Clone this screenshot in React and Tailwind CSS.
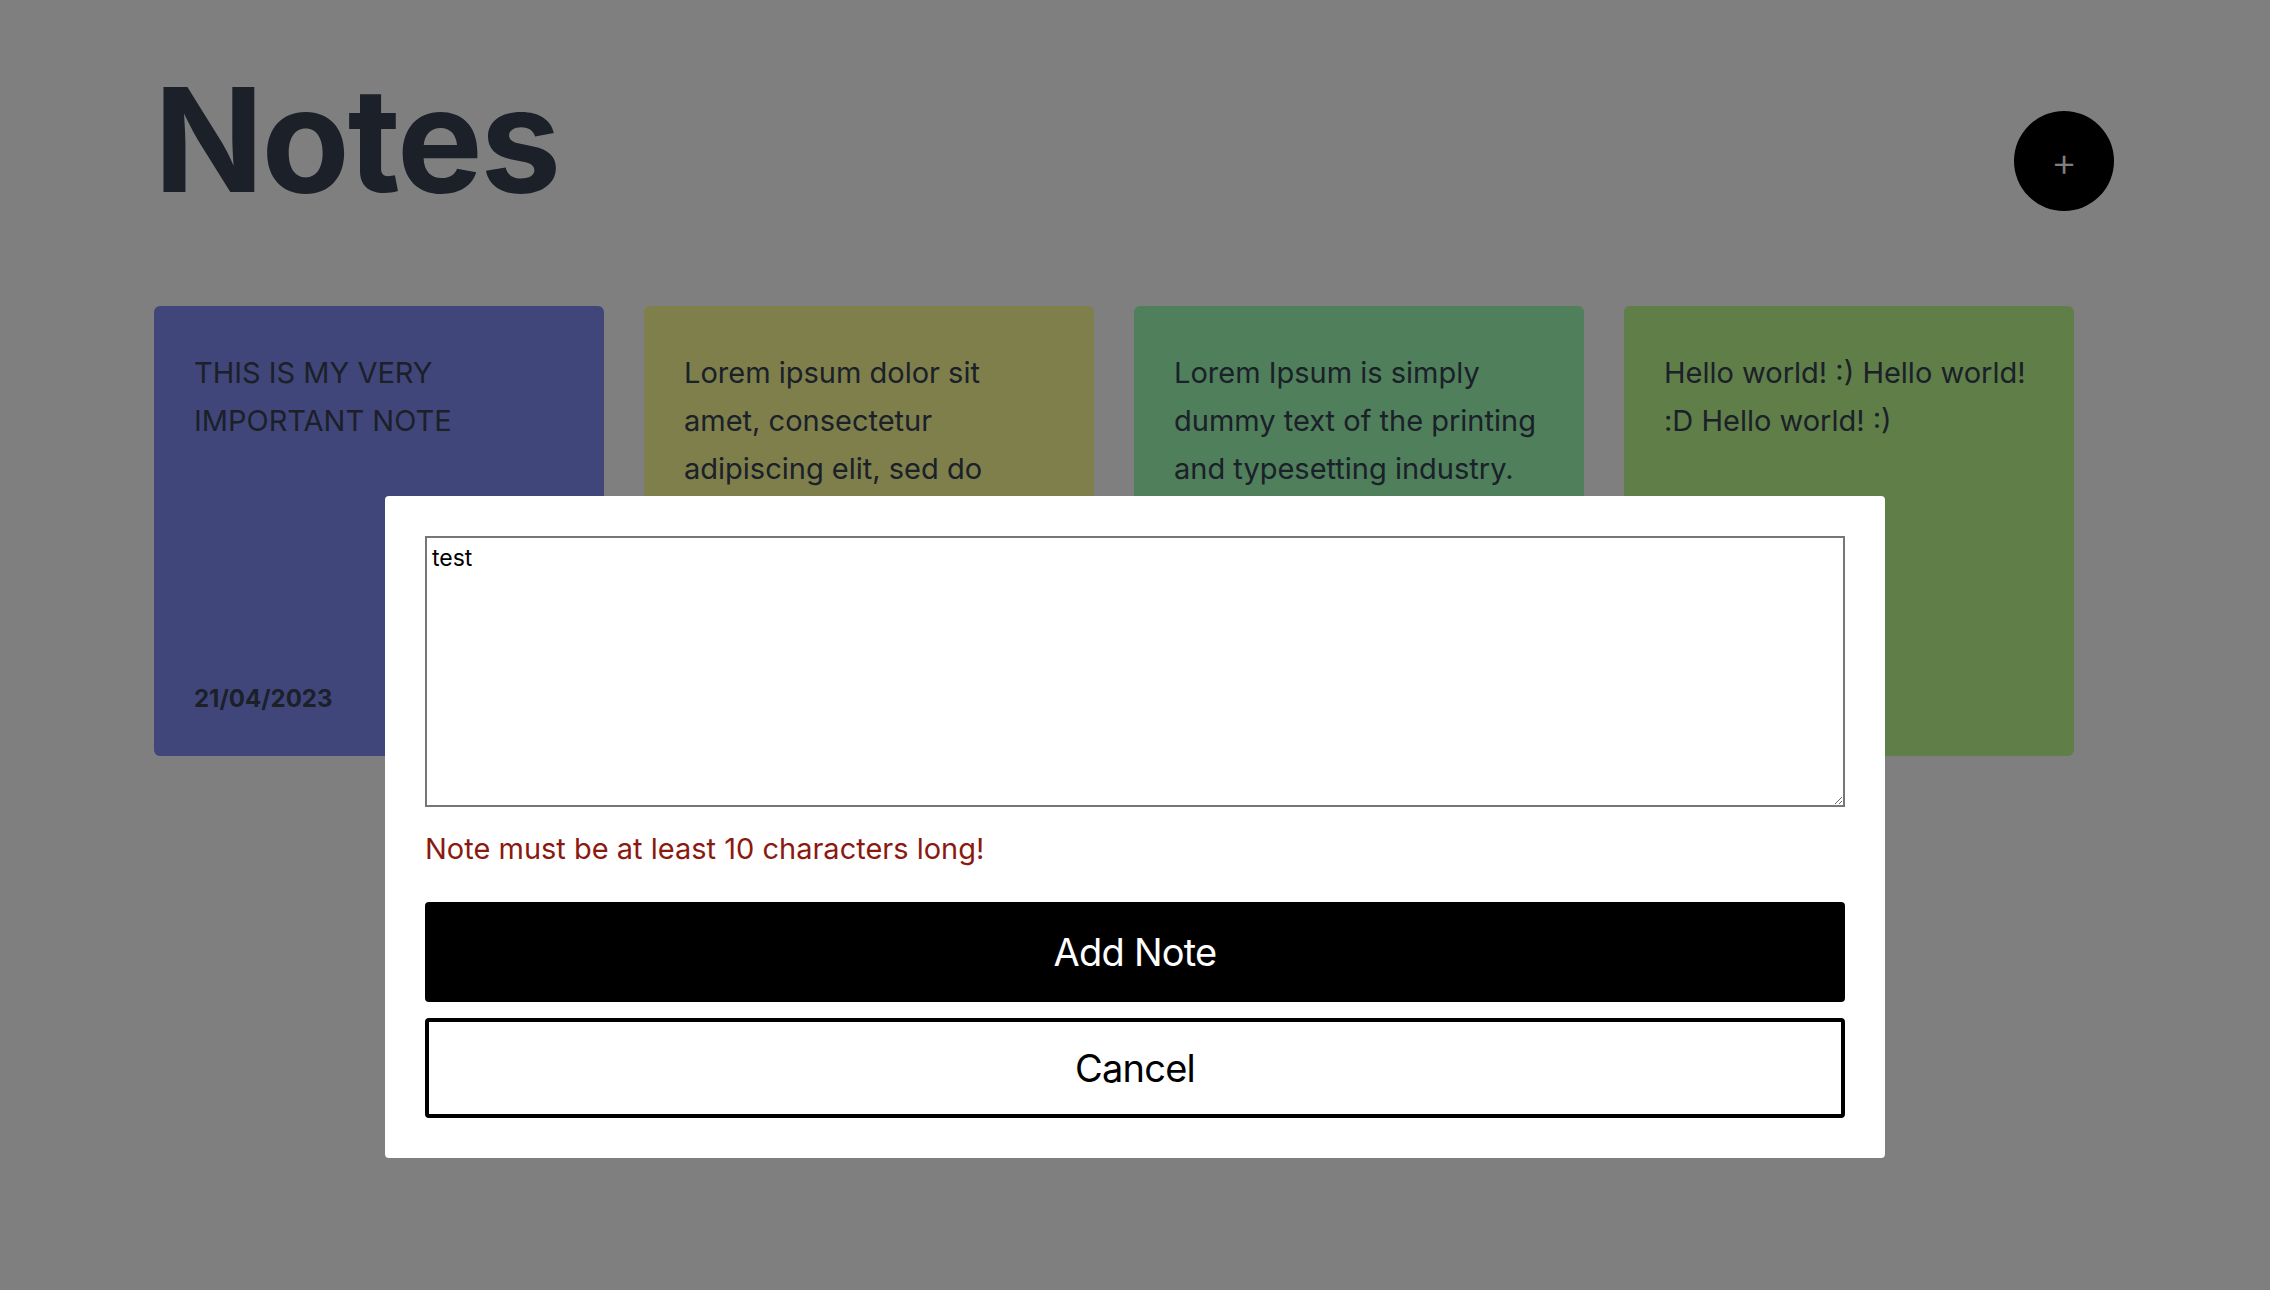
import { useState } from 'react';

const notes = [
  {
    id: 1,
    text: 'THIS IS MY VERY IMPORTANT NOTE',
    date: '21/04/2023',
    color: 'bg-[#828cf4]'
  },
  {
    id: 2,
    text: 'Lorem ipsum dolor sit amet, consectetur adipiscing elit, sed do eiusmod tempor incididunt ut labore.',
    date: '21/04/2023',
    color: 'bg-[#fcfe96]'
  },
  {
    id: 3,
    text: 'Lorem Ipsum is simply dummy text of the printing and typesetting industry.',
    date: '21/04/2023',
    color: 'bg-[#9effb6]'
  },
  {
    id: 4,
    text: 'Hello world! :) Hello world! :D Hello world! :)',
    date: '21/04/2023',
    color: 'bg-[#befc90]'
  }
];

function NoteCard({ note }) {
  return (
    <div className={`${note.color} w-[450px] h-[450px] rounded-md px-10 pt-[43px] pb-[41px] flex flex-col justify-between overflow-hidden`}>
      <p className="text-[29px] leading-[48px] text-gray-700">{note.text}</p>
      <span className="text-[24px] leading-[32px] font-bold text-gray-700">{note.date}</span>
    </div>
  );
}

export default function App() {
  const [value, setValue] = useState('test');

  return (
    <div className="relative min-h-[1290px] bg-white font-['Inter','Noto_Sans',sans-serif]">
      {/* page */}
      <div className="pl-[154px] pr-[156px] pt-[68px]">
        <header className="flex items-start justify-between">
          <h1 className="text-[144px] leading-none font-bold tracking-[-0.015em] text-gray-700">Notes</h1>
          <button
            type="button"
            className="mt-[43px] w-[100px] h-[100px] rounded-full bg-black text-white text-[40px] font-light flex items-center justify-center pt-[2px]"
          >
            +
          </button>
        </header>

        <div className="mt-[94px] flex flex-wrap gap-10">
          {notes.map((note) => (
            <NoteCard key={note.id} note={note} />
          ))}
        </div>
      </div>

      {/* modal */}
      <div className="fixed inset-0 bg-black/50 flex justify-center items-start pt-[496px]">
        <div className="w-[1500px] bg-white rounded-[4px] p-10 flex flex-col">
          <textarea
            value={value}
            onChange={(e) => setValue(e.target.value)}
            className="w-full h-[271px] border-2 border-[#767676] px-[5px] py-[3px] text-[23px] text-black outline-none"
          />
          <p className="mt-[22px] text-[29px] leading-[40px] text-[#8a1a10]">Note must be at least 10 characters long!</p>
          <button
            type="button"
            className="mt-[33px] h-[100px] rounded-[4px] bg-black text-white text-[38px] tracking-[-0.02em]"
          >
            Add Note
          </button>
          <button
            type="button"
            className="mt-4 h-[100px] rounded-[4px] border-4 border-black bg-white text-black text-[38px] tracking-[-0.02em]"
          >
            Cancel
          </button>
        </div>
      </div>
    </div>
  );
}
